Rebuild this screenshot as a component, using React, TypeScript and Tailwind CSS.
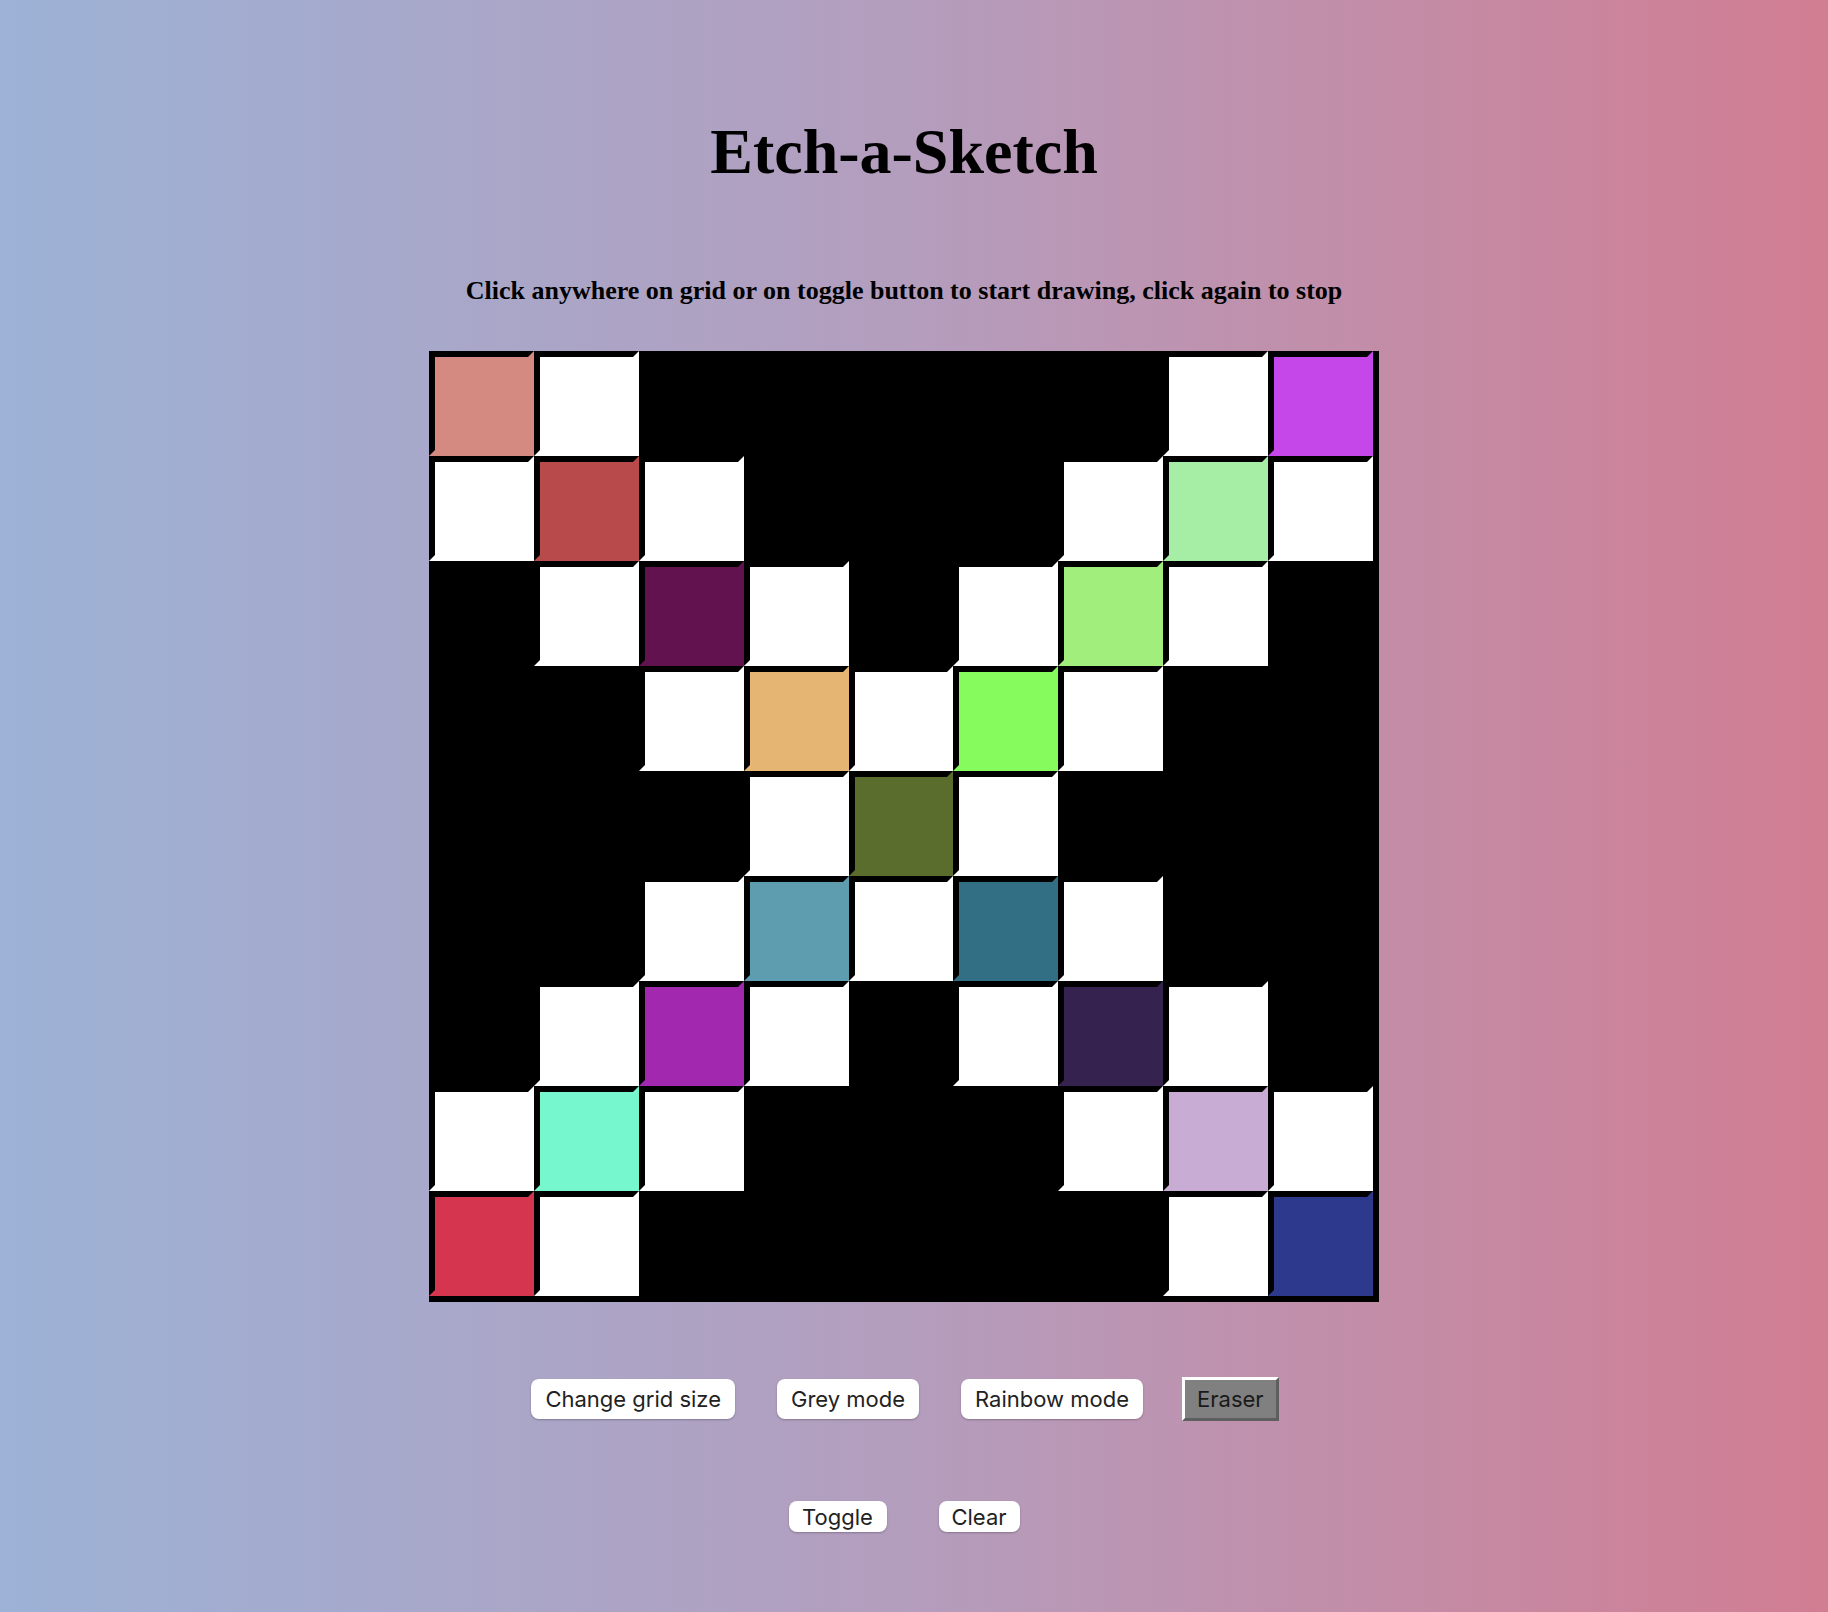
import { useState } from 'react';

const W = '#ffffff';
const B = '#000000';

// 9x9 board as drawn in the reference
const board: string[][] = [
  ['#d48a80', W, B, B, B, B, B, W, '#c547ea'],
  [W, '#b94a4c', W, B, B, B, W, '#a6eea6', W],
  [B, W, '#62134f', W, B, W, '#a2ee7c', W, B],
  [B, B, W, '#e5b574', W, '#86fb5e', W, B, B],
  [B, B, B, W, '#5b6d2c', W, B, B, B],
  [B, B, W, '#5e9caf', W, '#336f84', W, B, B],
  [B, W, '#a328b0', W, B, W, '#36224f', W, B],
  [W, '#76f7ce', W, B, B, B, W, '#c9acd4', W],
  ['#d63550', W, B, B, B, B, B, W, '#2d398c'],
];

const pill =
  'rounded-lg bg-white text-[#222] shadow-[0_1px_2px_rgba(0,0,0,0.25)] font-["Inter","Liberation_Sans",sans-serif]';

export default function App() {
  const [drawing, setDrawing] = useState(false);

  return (
    <div className="min-h-screen w-full bg-[linear-gradient(90deg,#9cb2d6_0%,#b49dbd_50%,#d17d92_100%)] text-black">
      <div className="flex flex-col items-center pr-[20px] font-['Liberation_Serif',serif]">
        <h1 className="mt-[112px] text-[64px] font-bold leading-[80px]">
          Etch-a-Sketch
        </h1>

        <p className="mt-[84px] text-[26px] font-bold leading-[30px]">
          Click anywhere on grid or on toggle button to start drawing, click again to stop
        </p>

        <div
          onClick={() => setDrawing(!drawing)}
          className="mt-[45px] grid h-[951px] w-[950px] grid-cols-9 grid-rows-9 border-b-[6px] border-r-[6px] border-black bg-black"
        >
          {board.flat().map((color, i) => (
            <div
              key={i}
              className="border-[6px] border-b-transparent border-l-black border-r-transparent border-t-black"
              style={{ backgroundColor: color }}
            />
          ))}
        </div>

        <div className="ml-[2px] mt-[75px] flex items-center gap-[42px] text-[22px]">
          <button className={`${pill} h-[40px] px-[14px]`}>Change grid size</button>
          <button className={`${pill} h-[40px] px-[14px]`}>Grey mode</button>
          <button className={`${pill} h-[40px] px-[14px]`}>Rainbow mode</button>
          <button className="ml-[-3px] h-[44px] border-[3px] border-b-[#5e5e5e] border-l-white border-r-[#5e5e5e] border-t-white bg-[#808080] px-[12px] font-['Inter','Liberation_Sans',sans-serif] text-[#1a1a1a]">
            Eraser
          </button>
        </div>

        <div className="mt-[80px] flex items-center gap-[52px] pb-[80px] text-[22px]">
          <button className={`${pill} h-[31px] w-[98px]`}>Toggle</button>
          <button className={`${pill} h-[31px] w-[81px]`}>Clear</button>
        </div>
      </div>
    </div>
  );
}
